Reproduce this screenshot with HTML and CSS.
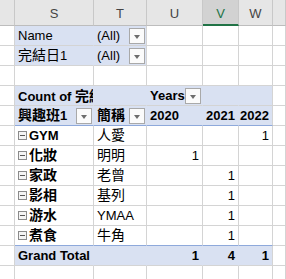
FILE: index.html
```html
<!DOCTYPE html>
<html lang="en">
<head>
  <meta charset="UTF-8">
  <title>Pivot</title>
  <link rel="stylesheet" href="styles.css">
</head>
<body>
  <div class="sheet">
    <div class="row head">
      <div class="c"></div>
      <div class="c">S</div>
      <div class="c">T</div>
      <div class="c">U</div>
      <div class="c sel">V</div>
      <div class="c">W</div>
      <div class="c"></div>
    </div>

    <div class="row">
      <div class="c"></div>
      <div class="c fill">Name</div>
      <div class="c fill last split">(All)<span class="dd"></span></div>
      <div class="c"></div><div class="c"></div><div class="c"></div><div class="c"></div>
    </div>
    <div class="row">
      <div class="c"></div>
      <div class="c fill"><span class="zh">完結日</span>1</div>
      <div class="c fill last split">(All)<span class="dd"></span></div>
      <div class="c"></div><div class="c"></div><div class="c"></div><div class="c"></div>
    </div>
    <div class="row">
      <div class="c"></div><div class="c"></div><div class="c"></div><div class="c"></div>
      <div class="c"></div><div class="c"></div><div class="c"></div>
    </div>

    <div class="row">
      <div class="c"></div>
      <div class="c fill b clip">Count of <span class="zh">完結日</span>1</div>
      <div class="c fill"></div>
      <div class="c fill b split">Years<span class="dd"></span></div>
      <div class="c fill"></div>
      <div class="c fill last"></div>
      <div class="c"></div>
    </div>
    <div class="row hdr">
      <div class="c"></div>
      <div class="c fill b split"><span><span class="zh">興趣班</span>1</span><span class="dd"></span></div>
      <div class="c fill b split"><span class="zh">簡稱</span><span class="dd"></span></div>
      <div class="c fill b">2020</div>
      <div class="c fill b num">2021</div>
      <div class="c fill b num last">2022</div>
      <div class="c"></div>
    </div>

    <div class="row">
      <div class="c"></div>
      <div class="c b"><span class="box"></span>GYM</div>
      <div class="c"><span class="zh">人愛</span></div>
      <div class="c num"></div><div class="c num"></div><div class="c num">1</div>
      <div class="c"></div>
    </div>
    <div class="row">
      <div class="c"></div>
      <div class="c b"><span class="box"></span><span class="zh">化妝</span></div>
      <div class="c"><span class="zh">明明</span></div>
      <div class="c num">1</div><div class="c num"></div><div class="c num"></div>
      <div class="c"></div>
    </div>
    <div class="row">
      <div class="c"></div>
      <div class="c b"><span class="box"></span><span class="zh">家政</span></div>
      <div class="c"><span class="zh">老曾</span></div>
      <div class="c num"></div><div class="c num">1</div><div class="c num"></div>
      <div class="c"></div>
    </div>
    <div class="row">
      <div class="c"></div>
      <div class="c b"><span class="box"></span><span class="zh">影相</span></div>
      <div class="c"><span class="zh">基列</span></div>
      <div class="c num"></div><div class="c num">1</div><div class="c num"></div>
      <div class="c"></div>
    </div>
    <div class="row">
      <div class="c"></div>
      <div class="c b"><span class="box"></span><span class="zh">游水</span></div>
      <div class="c">YMAA</div>
      <div class="c num"></div><div class="c num">1</div><div class="c num"></div>
      <div class="c"></div>
    </div>
    <div class="row">
      <div class="c"></div>
      <div class="c b"><span class="box"></span><span class="zh">煮食</span></div>
      <div class="c"><span class="zh">牛角</span></div>
      <div class="c num"></div><div class="c num">1</div><div class="c num"></div>
      <div class="c"></div>
    </div>

    <div class="row total">
      <div class="c"></div>
      <div class="c fill b">Grand Total</div>
      <div class="c fill"></div>
      <div class="c fill b num">1</div>
      <div class="c fill b num">4</div>
      <div class="c fill b num last">1</div>
      <div class="c"></div>
    </div>
    <div class="row">
      <div class="c"></div><div class="c"></div><div class="c"></div><div class="c"></div>
      <div class="c"></div><div class="c"></div><div class="c"></div>
    </div>
  </div>
</body>
</html>
```

FILE: styles.css
```css
body {
  margin: 0;
  background: #fff;
  font-family: "Liberation Sans", "Noto Sans CJK TC", sans-serif;
  font-size: 13px;
  color: #000;
  overflow: hidden;
}

.sheet {
  width: 286px;
}

.row {
  display: grid;
  grid-template-columns: 15px 79px 53px 56px 36px 34px 1fr;
  height: 20px;
}

.c {
  box-sizing: border-box;
  border-right: 1px solid #d4d4d4;
  border-bottom: 1px solid #d4d4d4;
  padding: 0 2px 0 3px;
  line-height: 19px;
  white-space: nowrap;
  overflow: hidden;
  display: flex;
  align-items: flex-end;
}

.zh {
  font-size: 14px;
  line-height: 19px;
}

/* column letters */
.head {
  height: 26px;
}

.head .c {
  background: #e6e6e6;
  border-right-color: #c8c8c8;
  border-bottom-color: #bdbdbd;
  justify-content: center;
  align-items: center;
  color: #444;
  font-size: 13px;
  padding: 2px 0 0;
}

.head .sel {
  background: #d2d2d2;
  color: #217346;
  border-bottom: 2px solid #217346;
}

/* pivot */
.fill {
  background: #d9e1f2;
  border-right-color: #d9e1f2;
}

.fill.last {
  border-right-color: #d4d4d4;
}

.hdr .c.fill {
  border-bottom-color: #8ea9db;
}

.total .c.fill {
  border-top: 1px solid #8ea9db;
  margin-top: -1px;
  height: 21px;
}

.b {
  font-weight: bold;
}

.num {
  justify-content: flex-end;
  padding-right: 3px;
}

.split {
  justify-content: space-between;
  padding-right: 1px;
}

.clip {
  display: block;
  padding-top: 1px;
}

.dd {
  box-sizing: border-box;
  width: 16px;
  height: 16px;
  margin-bottom: 1px;
  border: 1px solid #a9a9a9;
  background: #fbfbfb;
  position: relative;
  flex: none;
}

.dd::after {
  content: "";
  position: absolute;
  left: 4px;
  top: 6px;
  border-left: 3.5px solid transparent;
  border-right: 3.5px solid transparent;
  border-top: 4px solid #6d6d6d;
}

.box {
  box-sizing: border-box;
  width: 9px;
  height: 9px;
  border: 1px solid #8a8a8a;
  background: #f4f4f4;
  margin: 0 2px 5px 0;
  position: relative;
  flex: none;
}

.box::after {
  content: "";
  position: absolute;
  left: 1px;
  right: 1px;
  top: 3px;
  height: 1px;
  background: #555;
}
```
